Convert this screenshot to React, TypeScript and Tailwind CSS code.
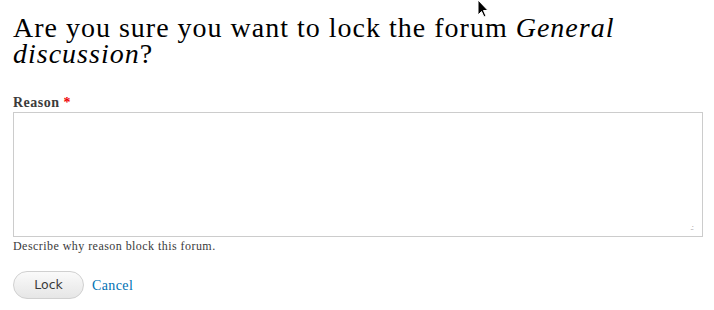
export default function App() {
  return (
    <div className="relative w-[714px] h-[310px] bg-white px-[13px] pt-[15px] font-['Liberation_Serif',serif] text-[#3b3b3b]">
      <h1 className="font-['Liberation_Serif',serif] text-[28px] leading-[26px] text-black font-normal tracking-[1px]">
        Are you sure you want to lock the forum <em>General discussion</em>?
      </h1>

      <form className="mt-[28px]" onSubmit={(e) => e.preventDefault()}>
        <label className="block text-[14px] font-bold text-[#3b3b3b] leading-[16px] tracking-[0.5px]">
          Reason <span className="text-[#e00]">*</span>
        </label>
        <div className="relative mt-[1px]">
          <textarea className="block w-[690px] h-[125px] border border-[#ccc] resize-none outline-none" />
          <span className="absolute right-[8px] bottom-[5px] text-[9px] leading-none tracking-[-1px] text-[#999]">.:</span>
        </div>
        <p className="text-[12px] text-[#3b3b3b] mt-[1px] leading-[16px] tracking-[0.45px]">
          Describe why reason block this forum.
        </p>

        <div className="flex items-center gap-[8px] mt-[17px]">
          <button
            type="submit"
            className="w-[71px] h-[28px] rounded-full border border-[#d0d0d0] bg-gradient-to-b from-[#fafafa] to-[#e6e6e6] font-['DejaVu_Sans',sans-serif] text-[12.5px] text-[#3a3a3a]"
          >
            Lock
          </button>
          <a href="#" className="text-[14px] tracking-[0.4px] text-[#0071b3]">
            Cancel
          </a>
        </div>
      </form>

      <svg className="absolute left-[477px] top-0" width="12" height="20" viewBox="0 0 12 20">
        <path d="M1 0 L1 15 L4.5 11.5 L7 17 L9 16 L6.5 10.5 L11 10.5 Z" fill="#000" stroke="#fff" strokeWidth="1" />
      </svg>
    </div>
  );
}
